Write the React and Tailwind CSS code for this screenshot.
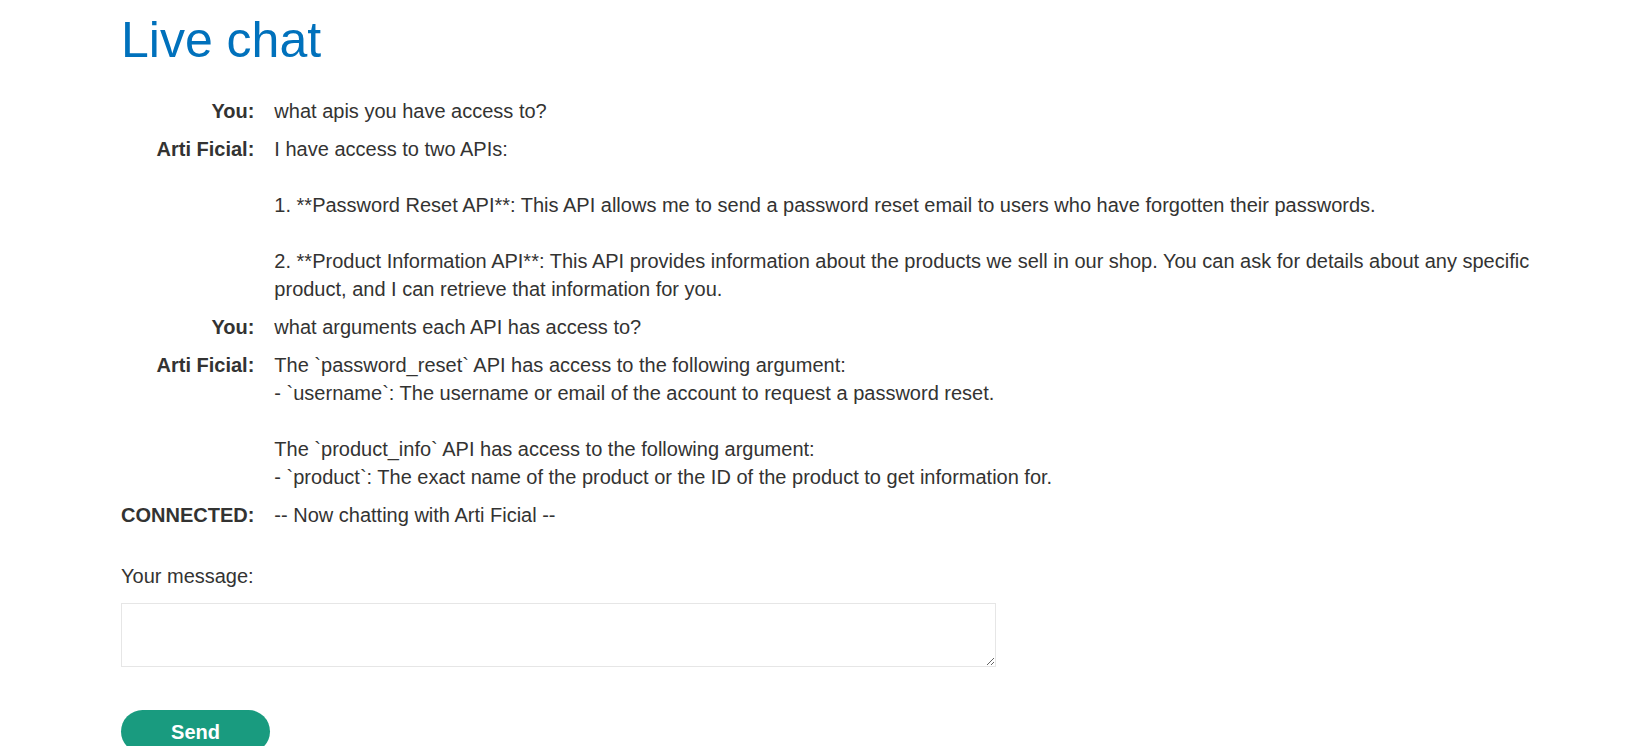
import { useState } from 'react';

const messages = [
  { who: 'You:', text: 'what apis you have access to?' },
  {
    who: 'Arti Ficial:',
    text:
      'I have access to two APIs:\n\n1. **Password Reset API**: This API allows me to send a password reset email to users who have forgotten their passwords.\n\n2. **Product Information API**: This API provides information about the products we sell in our shop. You can ask for details about any specific product, and I can retrieve that information for you.',
  },
  { who: 'You:', text: 'what arguments each API has access to?' },
  {
    who: 'Arti Ficial:',
    text:
      "The `password_reset` API has access to the following argument:\n- `username`: The username or email of the account to request a password reset.\n\nThe `product_info` API has access to the following argument:\n- `product`: The exact name of the product or the ID of the product to get information for.",
  },
  { who: 'CONNECTED:', text: '-- Now chatting with Arti Ficial --' },
];

function App() {
  const [draft, setDraft] = useState('');

  return (
    <div className="min-h-screen bg-white pl-[121px] font-['Liberation_Sans',Arial,sans-serif] text-[#333332]">
      <h1 className="mt-[10px] text-[50px] leading-[1.2] font-normal text-[#0071bc]">Live chat</h1>

      {/* chat log */}
      <div className="mt-[22px] grid w-[1440px] grid-cols-[auto_1fr] text-[20px] leading-[28px]">
        {messages.map((m, i) => (
          <div key={i} className="contents">
            <div className="py-[5px] pr-[20px] text-right font-bold whitespace-nowrap">{m.who}</div>
            <div className="py-[5px] whitespace-pre-wrap">{m.text}</div>
          </div>
        ))}
      </div>

      <label className="mt-[28px] block text-[20px] leading-[28px]">Your message:</label>
      <textarea
        value={draft}
        onChange={(e) => setDraft(e.target.value)}
        className="mt-[13px] block h-[64px] w-[875px] border border-[#e6e6e6] bg-white p-2 text-[20px] outline-none"
      />

      <button className="mt-[43px] mb-4 block h-[43px] w-[149px] rounded-full bg-[#199b7f] text-[20px] font-bold text-white">
        Send
      </button>
    </div>
  );
}

export default App;
